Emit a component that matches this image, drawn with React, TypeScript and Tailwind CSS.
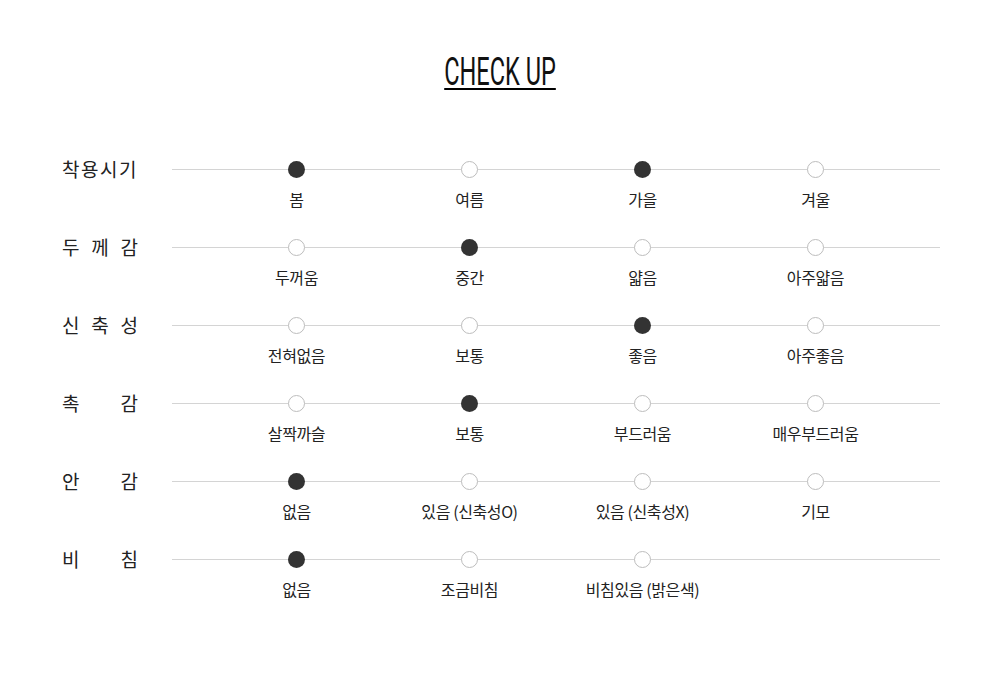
import React from "react";

type Row = {
  label: string;
  spaced: boolean;
  options: string[];
  checked: number[];
};

const rows: Row[] = [
  { label: "착용시기", spaced: false, options: ["봄", "여름", "가을", "겨울"], checked: [0, 2] },
  { label: "두께감", spaced: true, options: ["두꺼움", "중간", "얇음", "아주얇음"], checked: [1] },
  { label: "신축성", spaced: true, options: ["전혀없음", "보통", "좋음", "아주좋음"], checked: [2] },
  { label: "촉감", spaced: true, options: ["살짝까슬", "보통", "부드러움", "매우부드러움"], checked: [1] },
  { label: "안감", spaced: true, options: ["없음", "있음 (신축성O)", "있음 (신축성X)", "기모"], checked: [0] },
  { label: "비침", spaced: true, options: ["없음", "조금비침", "비침있음 (밝은색)"], checked: [0] },
];

const App = () => {
  return (
    <div
      className="w-[1000px] h-[682px] bg-white text-[#222]"
      style={{ fontFamily: '"Noto Sans CJK KR", "Noto Sans", sans-serif' }}
    >
      {/* title */}
      <div className="flex justify-center pt-[56px]">
        <h1
          className="text-[38px] leading-[32px] font-normal text-[#111] border-b-2 border-black scale-x-[0.62] origin-center"
          style={{ fontFamily: 'Roboto, "Liberation Sans", sans-serif' }}
        >
          CHECK UP
        </h1>
      </div>

      {/* rows */}
      <div className="pt-[71px] pl-[62px]">
        {rows.map((row) => (
          <div key={row.label} className="flex h-[78px]">
            <div className="w-[76px] h-[18px] flex items-center justify-between text-[19px] text-[#222] mt-[-1px]">
              {row.spaced
                ? row.label.split("").map((ch, j) => <span key={j}>{ch}</span>)
                : <span className="tracking-[1.5px]">{row.label}</span>}
            </div>
            <div className="ml-[34px] w-[768px] relative">
              <div className="absolute left-0 right-0 top-[8px] h-px bg-[#d4d4d4]" />
              <div className="relative grid grid-cols-4 px-[38px]">
                {row.options.map((opt, i) => (
                  <div key={i} className="flex flex-col items-center">
                    {row.checked.includes(i) ? (
                      <div className="w-[17px] h-[17px] rounded-full bg-[#333]" />
                    ) : (
                      <div className="w-[17px] h-[17px] rounded-full bg-white border border-[#bdbdbd]" />
                    )}
                    <div className="mt-[11px] text-[16px] leading-[20px] text-[#222] tracking-[-0.4px] whitespace-nowrap">
                      {opt}
                    </div>
                  </div>
                ))}
              </div>
            </div>
          </div>
        ))}
      </div>
    </div>
  );
};

export default App;
